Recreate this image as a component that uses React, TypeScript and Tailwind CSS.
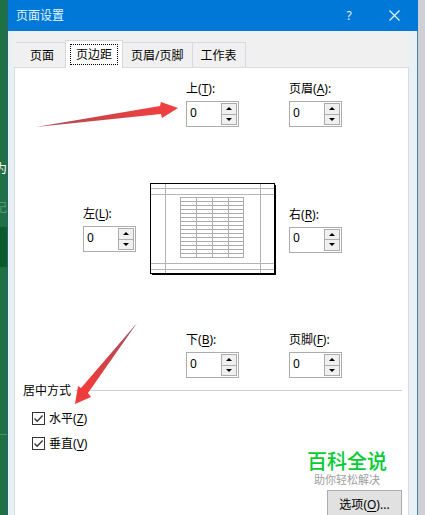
import { useState } from 'react';

const TABS = ['页面', '页边距', '页眉/页脚', '工作表'];

const Hotkey = ({ text, letter, colon = false }: { text: string; letter: string; colon?: boolean }) => (
    <>
        {text}(<span className="underline underline-offset-2">{letter}</span>){colon && ':'}
    </>
);

interface MarginFieldProps {
    id: string;
    text: string;
    letter: string;
}

const MarginField = ({ id, text, letter }: MarginFieldProps) => {
    const [value, setValue] = useState('0');

    const step = (delta: number) => setValue(String(Math.max(0, (Number(value) || 0) + delta)));

    return (
        <div className="w-[53px]">
            <label htmlFor={id} className="mb-1 block h-[17px] leading-[17px] whitespace-nowrap">
                <Hotkey text={text} letter={letter} colon />
            </label>
            <div className="flex h-[26px] border border-[#acacac] bg-white">
                <input
                    id={id}
                    type="text"
                    value={value}
                    onChange={(e) => setValue(e.target.value)}
                    className="mb-1 w-full min-w-0 flex-1 pl-[3px] outline-none"
                />
                <div className="flex w-[17px] flex-col py-px pr-px">
                    <button
                        type="button"
                        aria-label="增加"
                        onClick={() => step(1)}
                        className="flex flex-1 items-center justify-center border border-[#acacac] bg-[#f0f0f0]"
                    >
                        <svg width="6" height="3" viewBox="0 0 6 3">
                            <path d="M0 3 3 0 6 3Z" fill="#000" />
                        </svg>
                    </button>
                    <button
                        type="button"
                        aria-label="减少"
                        onClick={() => step(-1)}
                        className="flex flex-1 items-center justify-center border border-t-0 border-[#acacac] bg-[#f0f0f0]"
                    >
                        <svg width="6" height="3" viewBox="0 0 6 3">
                            <path d="M0 0 3 3 6 0Z" fill="#000" />
                        </svg>
                    </button>
                </div>
            </div>
        </div>
    );
};

const PagePreview = () => (
    <svg width="126" height="92" viewBox="0 0 126 92" shapeRendering="crispEdges">
        <rect x="2" y="2" width="124" height="90" fill="#000" />
        <rect x="0" y="0" width="125" height="91" fill="#000" />
        <rect x="1" y="1" width="123" height="89" fill="#fff" />
        <g stroke="#b4b4b4" fill="none">
            <path d="M1 5.5H124M1 11.5H124M1 80.5H124M1 86.5H124M15.5 1V90M110.5 1V90" />
        </g>
        <g stroke="#acacac" fill="none">
            {Array.from({ length: 16 }, (_, i) => (
                <path key={i} d={`M30 ${14.5 + i * 4}H94`} />
            ))}
            <path d="M30.5 14V75M46.5 14V75M62.5 14V75M78.5 14V75M93.5 14V75" />
        </g>
    </svg>
);

const CenterOption = ({ text, letter }: { text: string; letter: string }) => {
    const [checked, setChecked] = useState(true);

    return (
        <label className="flex h-[17px] items-center gap-1">
            <span className="relative block size-[13px]">
                <input
                    type="checkbox"
                    checked={checked}
                    onChange={(e) => setChecked(e.target.checked)}
                    className="block size-[13px] appearance-none border border-[#333333] bg-white"
                />
                {checked && (
                    <svg className="pointer-events-none absolute inset-0" width="13" height="13" viewBox="0 0 13 13">
                        <path d="M2.5 6.5 5.2 9.3 10.6 3.5" fill="none" stroke="#333" strokeWidth="1.3" />
                    </svg>
                )}
            </span>
            <span>
                <Hotkey text={text} letter={letter} />
            </span>
        </label>
    );
};

const Arrows = () => (
    <svg className="pointer-events-none absolute top-0 left-0" width="200" height="420" viewBox="0 0 200 420">
        <defs>
            <linearGradient id="arrowRight" x1="0" x2="1" y1="0" y2="0">
                <stop offset="0" stopColor="#9c5058" />
                <stop offset="0.4" stopColor="#cc4448" />
                <stop offset="0.85" stopColor="#ee4040" />
            </linearGradient>
            <linearGradient id="arrowDown" x1="1" x2="0" y1="0" y2="1">
                <stop offset="0" stopColor="#8c5468" />
                <stop offset="0.4" stopColor="#c8444c" />
                <stop offset="0.75" stopColor="#ee3c3c" />
            </linearGradient>
        </defs>
        <path d="M36 127 160 106 161 102 178 108 162 118 161 114Z" fill="url(#arrowRight)" />
        <path d="M137 323 88 393 91 397 75 404 78 386 81 388Z" fill="url(#arrowDown)" />
    </svg>
);

export default function App() {
    const [activeTab, setActiveTab] = useState('页边距');

    return (
        <div className="relative flex h-screen overflow-hidden bg-[#cfd0d6] font-['Noto_Sans','Noto_Sans_CJK_SC',sans-serif] text-[12px] leading-[17px] text-black">
            {/* sheet window behind the dialog */}
            <div className="flex w-2 shrink-0 flex-col overflow-hidden border-r border-[#2c5f72] bg-[#1f7145]">
                <div className="mt-[160px] flex h-[17px] justify-end text-white">为</div>
                <div className="mt-[22px] flex h-[17px] justify-end text-[#5a9a76]">记</div>
                <div className="mt-[11px] h-10 shrink-0 bg-[#0b5a2d]" />
                <div className="mt-[167px] h-px shrink-0 bg-[#4c9269]" />
            </div>

            <div className="mr-[7px] flex min-w-0 flex-1 flex-col border-r border-[#4d8499] bg-[#e8f2f6]">
                <header className="-mr-px flex h-[31px] shrink-0 items-center bg-[#0078d7] pr-[18px] pl-2 text-[#e2f7ff]">
                    <h1 className="flex-1">页面设置</h1>
                    <button type="button" aria-label="帮助" className="w-5 text-center">
                        ?
                    </button>
                    <button type="button" aria-label="关闭" className="ml-[29px] flex w-3 justify-center">
                        <svg width="11" height="11" viewBox="0 0 11 11">
                            <path d="M.5.5 10.5 10.5M10.5.5.5 10.5" stroke="#e2f7ff" strokeWidth="1.2" />
                        </svg>
                    </button>
                </header>

                <div className="mr-2 ml-1 flex h-[36px] shrink-0 items-end bg-[#f0f0f0] pl-1" role="tablist">
                    {TABS.map((tab) => (
                        <button
                            key={tab}
                            type="button"
                            role="tab"
                            aria-selected={tab === activeTab}
                            onClick={() => setActiveTab(tab)}
                            className={
                                tab === activeTab
                                    ? 'relative z-10 -mb-px -ml-px h-[28px] border border-b-0 border-[#d5d9e2] bg-white px-1 pb-px'
                                    : 'h-[25px] border-t border-r border-[#d5d9e2] px-2 first:pr-[11px] first:pl-[14px]'
                            }
                        >
                            {tab === activeTab ? (
                                <span className="block border border-dotted border-black px-[5px] py-px">{tab}</span>
                            ) : (
                                tab
                            )}
                        </button>
                    ))}
                </div>

                <main className="mr-2 ml-[6px] flex-1 border-x border-t border-[#d9dbe2] bg-white pt-3">
                    <div className="grid grid-cols-[67px_36px_103px_1fr] items-center pl-[68px]">
                        <div className="col-start-3">
                            <MarginField id="margin-top" text="上" letter="T" />
                        </div>
                        <MarginField id="margin-header" text="页眉" letter="A" />

                        <div className="mt-[78px] mb-[79px]">
                            <MarginField id="margin-left" text="左" letter="L" />
                        </div>
                        <div className="col-span-2">
                            <PagePreview />
                        </div>
                        <MarginField id="margin-right" text="右" letter="R" />

                        <div className="col-start-3">
                            <MarginField id="margin-bottom" text="下" letter="B" />
                        </div>
                        <MarginField id="margin-footer" text="页脚" letter="F" />
                    </div>

                    <fieldset className="mt-1 mr-[6px] ml-2">
                        <legend className="flex w-full items-center gap-1">
                            居中方式
                            <span className="h-px flex-1 bg-[#d0d0d0]" />
                        </legend>
                        <div className="mt-[11px] flex flex-col gap-2 pl-[9px]">
                            <CenterOption text="水平" letter="Z" />
                            <CenterOption text="垂直" letter="V" />
                        </div>
                    </fieldset>

                    <div className="flex flex-col items-end pr-[6px]">
                        <div className="mr-[15px] text-center">
                            <p className="text-[20px] leading-5 font-medium text-[#06cb35]">百科全说</p>
                            <p className="text-[11px] leading-4 text-[#a0a0a0]">助你轻松解决</p>
                        </div>
                        <button
                            type="button"
                            className="mt-0.5 h-[30px] w-[75px] border border-[#adadad] bg-[#e1e1e1] pb-0.5"
                        >
                            <Hotkey text="选项" letter="O" />
                            ...
                        </button>
                    </div>
                </main>
            </div>
            <Arrows />
        </div>
    );
}
